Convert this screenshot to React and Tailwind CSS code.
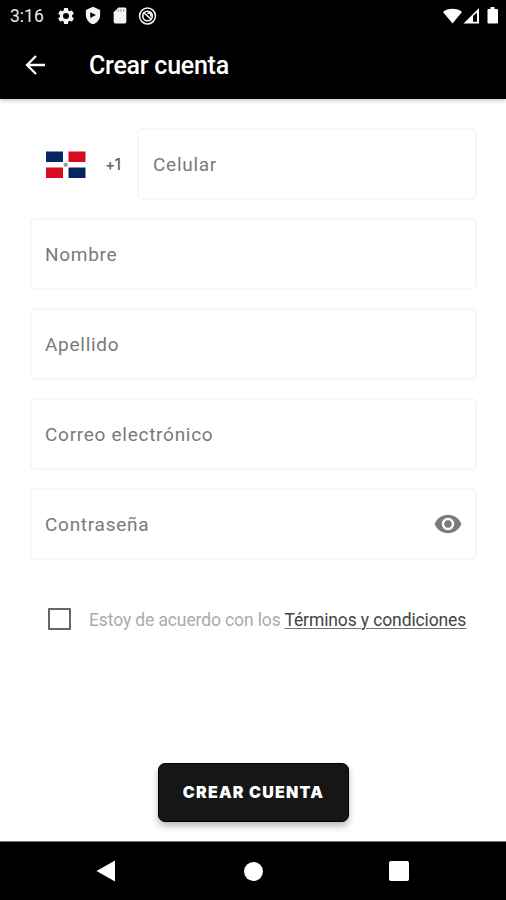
import React from 'react';

function StatusBar() {
  return (
    <div className="flex h-[31px] items-center bg-black pl-[10px] pr-[7px] text-white">
      <span className="w-[46px] pt-[1px] font-['Roboto',sans-serif] text-[17.5px] leading-[31px] text-[#e8e8e8]">3:16</span>
      <svg className="h-[20px] w-[20px]" viewBox="0 0 24 24" fill="#f4f4f4">
        <path d="M19.14 12.94c.04-.3.06-.61.06-.94s-.02-.64-.07-.94l2.03-1.58a.49.49 0 0 0 .12-.61l-1.92-3.32a.49.49 0 0 0-.59-.22l-2.39.96a7 7 0 0 0-1.62-.94l-.36-2.54a.48.48 0 0 0-.48-.41h-3.84a.48.48 0 0 0-.47.41l-.36 2.54c-.59.24-1.13.57-1.62.94l-2.39-.96a.48.48 0 0 0-.59.22L2.74 8.87a.48.48 0 0 0 .12.61l2.03 1.58a6.3 6.3 0 0 0-.02 1.88l-2.03 1.58a.49.49 0 0 0-.12.61l1.92 3.32c.12.22.37.29.59.22l2.39-.96c.5.38 1.03.7 1.62.94l.36 2.54c.05.24.24.41.48.41h3.84c.24 0 .44-.17.47-.41l.36-2.54c.59-.24 1.13-.56 1.62-.94l2.39.96c.22.08.47 0 .59-.22l1.92-3.32a.49.49 0 0 0-.12-.61zM12 15.6A3.6 3.6 0 1 1 12 8.4a3.6 3.6 0 0 1 0 7.2z" />
      </svg>
      <svg className="ml-[7px] h-[19px] w-[20px]" viewBox="0 0 24 24">
        <path d="M12 1 3 5v6c0 5.550 3.840 10.740 9 12 5.160-1.260 9-6.450 9-12V5z" fill="#f4f4f4" />
        <path d="m8.500 7.800 7.200 3.700-7.200 3.700z" fill="#000" />
      </svg>
      <svg className="ml-[7px] h-[19px] w-[20px]" viewBox="0 0 24 24">
        <path d="M18 2h-8L4 8v12c0 1.100.9 2 2 2h12c1.100 0 2-.9 2-2V4c0-1.100-.9-2-2-2z" fill="#f4f4f4" />
        <path d="M10 4.500v2.600M13.300 4.500v2.600M16.600 4.500v2.600" stroke="#888" strokeWidth="1.500" />
      </svg>
      <svg className="ml-[7px] h-[20px] w-[21px]" viewBox="0 0 24 24" fill="none" stroke="#f4f4f4">
        <circle cx="12" cy="12" r="9.500" strokeWidth="1.800" />
        <circle cx="12" cy="12" r="5.700" strokeWidth="2" />
        <path d="m7 7.500 10 9M12 8.500h4v4" strokeWidth="2" />
      </svg>
      <div className="ml-auto flex items-center">
        <svg className="h-[16px] w-[19px]" viewBox="0 0 19 16"><path d="M0 4C5-.4 14-.4 19 4L9.500 15.500z" fill="#fff" /></svg>
        <svg className="ml-[1px] h-[16px] w-[17px]" viewBox="0 0 17 16">
          <path fillRule="evenodd" d="M16 0v15.500H.5zM10 8v5.800h4V4.500z" fill="#fff" />
        </svg>
        <svg className="ml-[7px] h-[17px] w-[12px]" viewBox="0 0 12 17"><path d="M3.500 0h4v2H10q1 0 1 1v12.500q0 1-1 1H1.500q-1 0-1-1V3q0-1 1-1h2z" fill="#fff" /></svg>
      </div>
    </div>
  );
}

function Flag() {
  return (
    <svg className="h-[27px] w-[40px]" viewBox="0 0 40 27">
      <path fill="#062663" d="M0 .5h17v10.500H0zM22.500 16.500h17V27h-17z" />
      <path fill="#d80b20" d="M22.500 .5h17v10.500h-17zM0 16.500h17V27H0z" />
      <circle cx="19.700" cy="13.700" r="2.200" fill="#b5a4a0" />
      <circle cx="19.700" cy="13.700" r="1" fill="#827f72" />
    </svg>
  );
}

function Field({ label, className = 'pl-[13px]', children }) {
  return (
    <div className={`flex h-[72px] items-center justify-between rounded-[5px] border-2 border-[#f7f7f7] pr-[13px] ${className}`}>
      <span className="whitespace-nowrap pt-[1.4px] font-['Roboto',sans-serif] text-[19px] leading-[24px] tracking-[0.72px] text-[#7a7a7a]">{label}</span>
      {children}
    </div>
  );
}

export default function App() {
  return (
    <div className="flex h-[900px] w-[506px] flex-col overflow-hidden bg-white">
      <header className="h-[98.5px] shrink-0 bg-black shadow-[0_2px_4px_rgba(0,0,0,0.2)]">
        <StatusBar />
        <div className="flex h-[67px] items-center pl-[25px]">
          <svg className="h-[20px] w-[21px]" viewBox="0 0 21 20" fill="none" stroke="#fff" strokeWidth="2.300">
            <path d="M20 10H2M11 1 2 10l9 9" />
          </svg>
          <h1 className="ml-[43px] whitespace-nowrap pt-[2px] font-['Roboto',sans-serif] text-[25px] font-medium leading-[30px] tracking-[-0.25px] text-white">Crear cuenta</h1>
        </div>
      </header>
      <main className="flex flex-1 flex-col pl-[30px] pr-[29px] pt-[29.8px]">
        <div className="flex flex-col gap-[17.9px]">
          <div className="flex items-center">
            <div className="ml-[16px] flex"><Flag /></div>
            <span className="ml-[19px] w-[32px] font-['Inter',sans-serif] text-[15.5px] font-medium tracking-[-0.8px] text-[#606060]">+1</span>
            <Field label="Celular" className="flex-1 pl-[14px]" />
          </div>
          <Field label="Nombre" />
          <Field label="Apellido" />
          <Field label="Correo electrónico" />
          <Field label="Contraseña">
            <svg className="h-[20px] w-[28px]" viewBox="0 0 28 20">
              <path fillRule="evenodd" fill="#7b7b7b" d="M14 .8C8 .8 2.800 4.500.6 10 2.800 15.500 8 19.200 14 19.200S25.200 15.500 27.400 10C25.200 4.500 20 .8 14 .8zm0 15.400a6.200 6.200 0 1 1 0-12.400 6.200 6.200 0 0 1 0 12.400zm0-9.900a3.700 3.700 0 1 0 0 7.400 3.700 3.700 0 0 0 0-7.400z" />
            </svg>
          </Field>
        </div>
        <div className="mt-[47.1px] flex h-[24px] items-center pl-[18px]">
          <span className="h-[22px] w-[23px] rounded-[1px] border-2 border-[#666]" />
          <p className="ml-[18px] whitespace-nowrap pt-[2px] font-['Roboto',sans-serif] text-[17.5px] leading-[24px] tracking-[-0.12px] text-[#aaa]">
            Estoy de acuerdo con los <a className="text-[#444] underline decoration-[#777] decoration-1 underline-offset-2">Términos y condiciones</a>
          </p>
        </div>
        <button className="ml-[128px] mt-[132px] flex h-[59px] w-[191px] shrink-0 items-center justify-center rounded-[7px] border border-black bg-[#161616] pb-[1px] font-['Inter',sans-serif] text-[16px] font-black tracking-[1.2px] text-white shadow-[0_4px_7px_rgba(0,0,0,0.28)]">
          CREAR CUENTA
        </button>
      </main>
      <nav className="flex h-[59px] shrink-0 items-center border-t border-[#777] bg-black pl-[96px]">
        <svg className="h-[22px] w-[20px]" viewBox="0 0 20 22"><path d="M.5 11 19 .5v21z" fill="#fff" /></svg>
        <span className="ml-[128px] h-[19px] w-[19px] rounded-full bg-white" />
        <span className="ml-[126px] h-[20px] w-[20px] rounded-[2px] bg-white" />
      </nav>
    </div>
  );
}
